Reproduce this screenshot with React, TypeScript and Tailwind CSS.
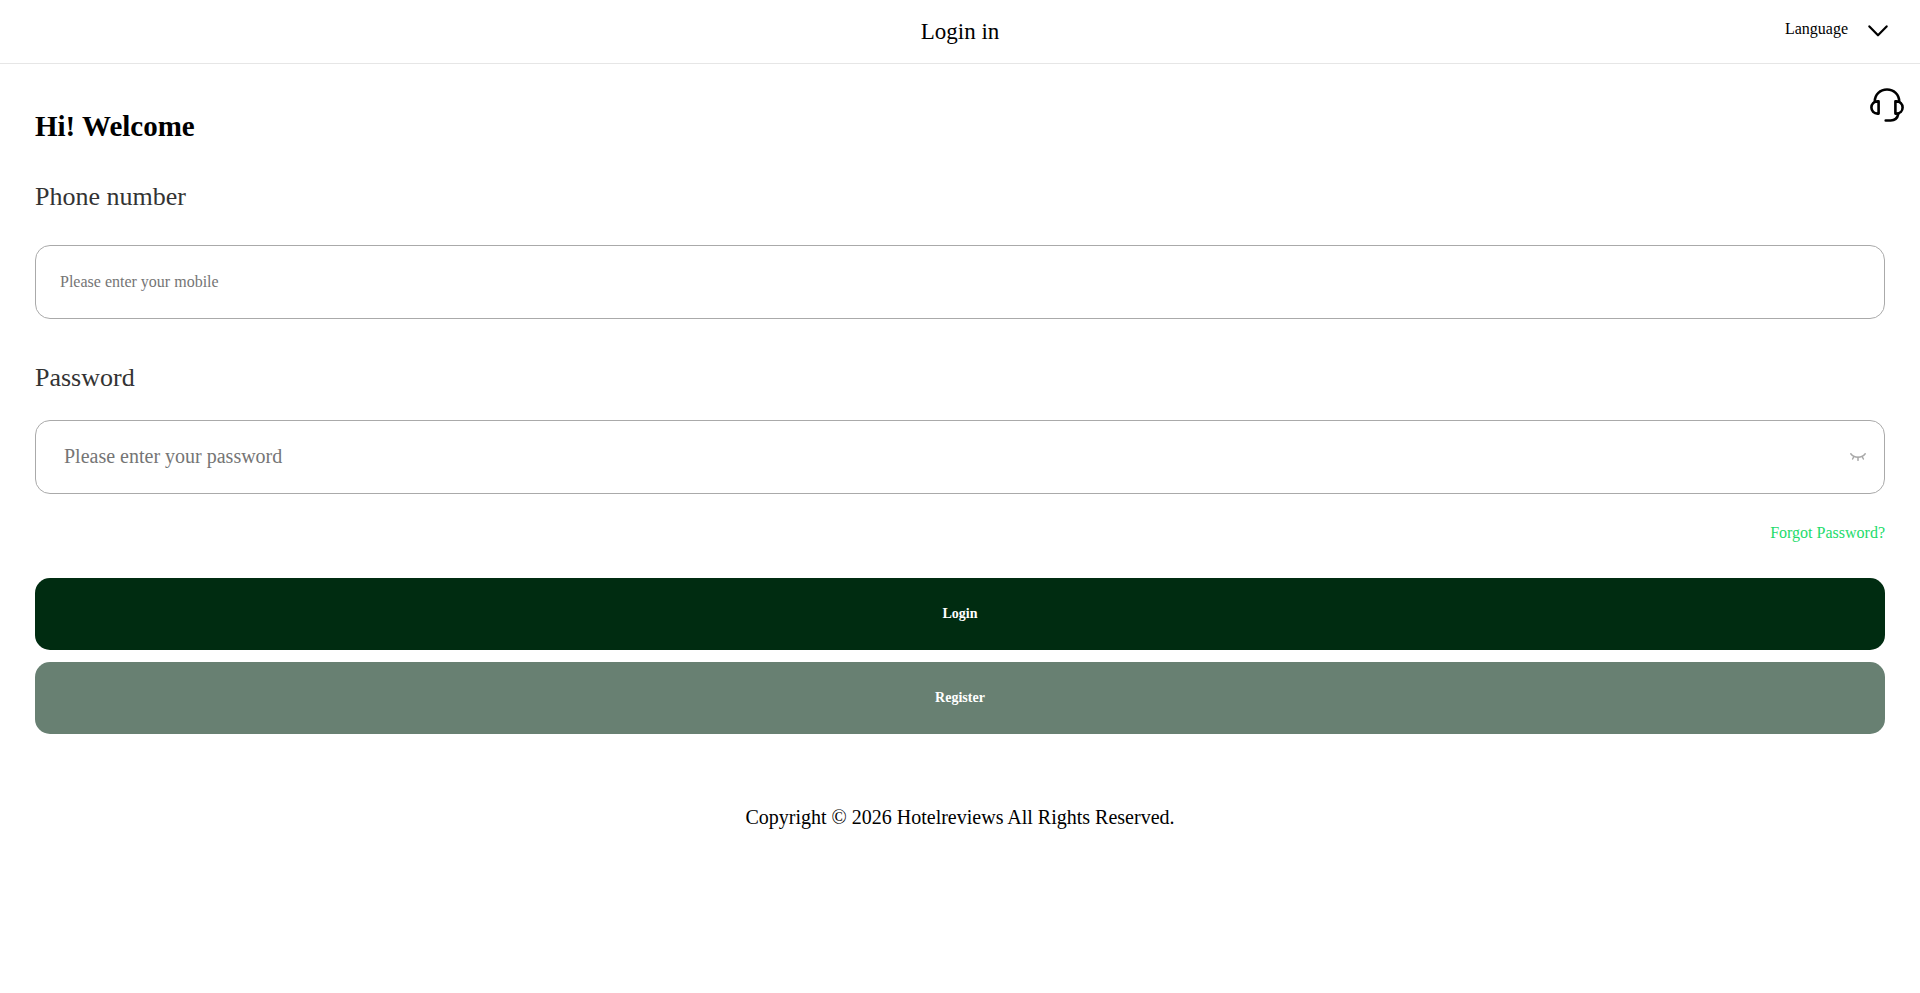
import { useState } from 'react';

const fieldClass =
  'block w-full h-[74px] rounded-[15px] border border-[#aaa] bg-transparent text-[#333] placeholder:text-[#757575] outline-none';

const labelClass = 'block text-[26px] leading-10 text-[#333]';

const buttonClass = 'w-full h-[72px] rounded-[15px] text-sm font-bold text-white cursor-pointer';

function ChevronIcon() {
  return (
    <svg width="20" height="12" viewBox="0 0 20 12" fill="none" stroke="#000" strokeWidth="2.2" strokeLinecap="round" strokeLinejoin="round" aria-hidden="true">
      <path d="M1.4 1.4L10 10.3l8.6-8.9" />
    </svg>
  );
}

function HeadsetIcon() {
  return (
    <svg width="34" height="34" viewBox="0 0 34 34" fill="none" stroke="#000" strokeWidth="2.6" strokeLinecap="round" strokeLinejoin="round" aria-hidden="true">
      <path d="M4.8 13.4C4.8 6.6 10.2 1.5 17 1.5s12.2 5.1 12.2 11.9" />
      <path d="M8.6 13.4v12.2H7.5c-3.5 0-6.1-2.7-6.1-6.1s2.6-6.1 6.1-6.1z" />
      <path d="M25.4 13.4v12.2h1.1c3.5 0 6.1-2.7 6.1-6.1s-2.6-6.1-6.1-6.1z" />
      <path d="M28.3 26c-.8 3.9-3.8 6.5-7.6 6.5h-5" />
    </svg>
  );
}

function ClosedEyeIcon() {
  return (
    <svg width="16" height="8" viewBox="0 0 16 8" fill="none" stroke="#a8a8a8" strokeWidth="1.5" strokeLinecap="round" aria-hidden="true">
      <path d="M.8.8C2.5 3 5 4.3 8 4.3S13.500 3 15.200.8" />
      <path d="M3.900 3.500L2.600 6M8 4.300v3M12.100 3.500L13.400 6" />
    </svg>
  );
}

export default function App() {
  const [showPassword, setShowPassword] = useState(false);

  return (
    <div className="min-h-screen bg-white text-black font-['Liberation_Serif',serif]">
      <header className="grid grid-cols-3 items-center h-16 px-8 border-b border-[#e6e6e6]">
        <h1 className="col-start-2 text-center text-[23px] leading-8">Login in</h1>
        <button type="button" className="flex items-center gap-5 justify-self-end pb-0.5 text-base cursor-pointer">
          <span className="mb-1">Language</span>
          <ChevronIcon />
        </button>
      </header>

      <a href="#support" aria-label="Customer service" className="fixed top-[88px] right-4">
        <HeadsetIcon />
      </a>

      <main className="px-[35px] pt-[42px]">
        <h2 className="text-[29px] leading-10 font-bold">Hi! Welcome</h2>

        <form onSubmit={(e) => e.preventDefault()}>
          <label htmlFor="phone" className={`${labelClass} mt-[31px]`}>
            Phone number
          </label>
          <input
            id="phone"
            type="tel"
            placeholder="Please enter your mobile"
            className={`${fieldClass} mt-7 px-6 text-base`}
          />

          <label htmlFor="password" className={`${labelClass} mt-[39px]`}>
            Password
          </label>
          <div className="relative mt-[22px]">
            <input
              id="password"
              type={showPassword ? 'text' : 'password'}
              placeholder="Please enter your password"
              className={`${fieldClass} pl-7 pr-14 pb-0.5 text-xl`}
            />
            <button
              type="button"
              aria-label="Toggle password visibility"
              onClick={() => setShowPassword(!showPassword)}
              className="absolute inset-y-0 right-[19px] cursor-pointer"
            >
              <ClosedEyeIcon />
            </button>
          </div>

          <div className="flex justify-end mt-[27px]">
            <a href="#forgot" className="text-base leading-6 text-[#1ddb6b]">
              Forgot Password?
            </a>
          </div>

          <div className="flex flex-col gap-3 mt-[33px]">
            <button type="submit" className={`${buttonClass} bg-[#002c11]`}>
              Login
            </button>
            <button type="button" className={`${buttonClass} bg-[#688072]`}>
              Register
            </button>
          </div>
        </form>
      </main>

      <footer className="mt-[68px] text-center text-xl leading-[30px]">
        Copyright © 2026 Hotelreviews All Rights Reserved.
      </footer>
    </div>
  );
}
